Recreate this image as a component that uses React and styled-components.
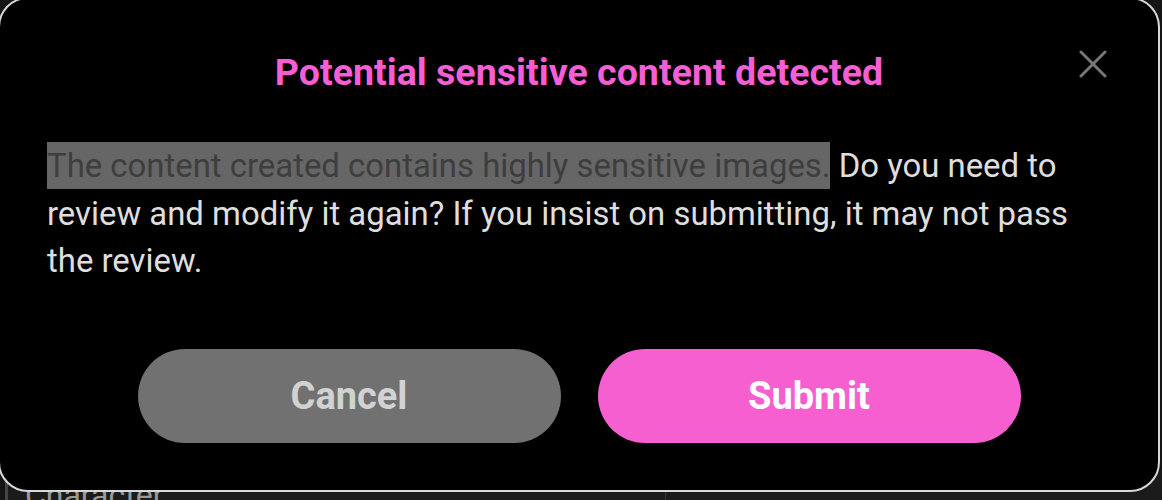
import React from "react";
import styled, { createGlobalStyle } from "styled-components";

const Global = createGlobalStyle`
  html, body { margin: 0; padding: 0; background: #151515; }
  body { font-family: Roboto, "Liberation Sans", sans-serif; overflow: hidden; }
`;

const Page = styled.div`
  width: 1162px;
  height: 500px;
  display: flex;
  flex-direction: column;
  justify-content: flex-end;
`;

const UnderRow = styled.div`
  height: 30px;
  display: flex;
  align-items: flex-start;
  border-left: 3px solid #444;
  margin-left: 5px;
  background: #1b1b1b;
`;

const UnderLabel = styled.span`
  width: 640px;
  padding: 9px 0 0 17px;
  font-size: 32px;
  line-height: 32px;
  color: #9a9a9a;
  border-right: 1px solid #333;
`;

const Dialog = styled.div`
  position: fixed;
  left: -2px;
  top: -3px;
  width: 1162px;
  height: 495px;
  box-sizing: border-box;
  background: #000;
  border: 2px solid #d8d8d8;
  border-radius: 30px;
  padding: 51px 47px 0 47px;
  display: flex;
  flex-direction: column;
`;

const Title = styled.h2`
  margin: 0;
  font-size: 37.6px;
  line-height: 44px;
  font-weight: 700;
  color: #f55ed4;
  text-align: center;
`;

const Close = styled.button`
  position: absolute;
  top: 50px;
  right: 50px;
  width: 30px;
  height: 30px;
  padding: 0;
  border: 0;
  background: transparent;
  display: flex;
  align-items: center;
  justify-content: center;
`;

const Body = styled.p`
  margin: 48px 0 0 0;
  font-size: 32.9px;
  line-height: 47.5px;
  color: #dedede;
`;

const Mark = styled.span`
  background: #666666;
  color: #3e3e3e;
  padding: 4px 0;
`;

const Actions = styled.div`
  margin-top: auto;
  margin-bottom: 47px;
  display: flex;
  justify-content: center;
  gap: 37px;
`;

const Button = styled.button`
  width: 423px;
  height: 94px;
  border: 0;
  border-radius: 47px;
  font-family: Roboto, "Liberation Sans", sans-serif;
  font-size: 38px;
  font-weight: 700;
  background: ${(p) => (p.$primary ? "#f55fd0" : "#717171")};
  color: ${(p) => (p.$primary ? "#ffffff" : "#d2d2d2")};
`;

export default function App() {
  return (
    <>
      <Global />
      <Page>
        <UnderRow>
          <UnderLabel>Character</UnderLabel>
        </UnderRow>
      </Page>
      <Dialog>
        <Title>Potential sensitive content detected</Title>
        <Close aria-label="Close">
          <svg width="28" height="28" viewBox="0 0 28 28">
            <path d="M2 2 L26 26 M26 2 L2 26" stroke="#777" strokeWidth="3" strokeLinecap="round" />
          </svg>
        </Close>
        <Body>
          <Mark>The content created contains highly sensitive images.</Mark> Do you need to review and modify it again? If you insist on submitting, it may not pass the review.
        </Body>
        <Actions>
          <Button>Cancel</Button>
          <Button $primary>Submit</Button>
        </Actions>
      </Dialog>
    </>
  );
}
